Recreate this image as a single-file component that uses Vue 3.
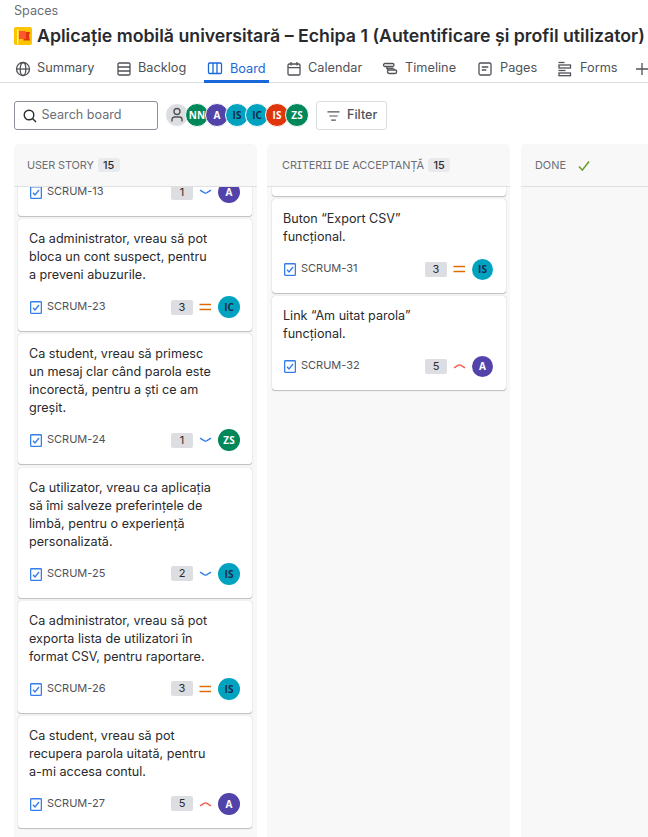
<script setup>
const tabs = [
  { name: 'Summary', icon: 'globe', width: 101 },
  { name: 'Backlog', icon: 'backlog', width: 90 },
  { name: 'Board', icon: 'columns', width: 80, active: true },
  { name: 'Calendar', icon: 'calendar', width: 96 },
  { name: 'Timeline', icon: 'timeline', width: 95 },
  { name: 'Pages', icon: 'pages', width: 80 },
  { name: 'Forms', icon: 'forms', width: 78 },
]

const people = [
  { initials: 'NN', tone: 'green' },
  { initials: 'A', tone: 'purple' },
  { initials: 'IS', tone: 'teal' },
  { initials: 'IC', tone: 'teal' },
  { initials: 'IS', tone: 'red' },
  { initials: 'ZS', tone: 'green' },
]

const columns = [
  {
    id: 'story', title: 'USER STORY', count: 15,
    cards: [
      { key: 'SCRUM-13', lines: ['', ''], points: 1, priority: 'low', who: 'A', tone: 'purple' },
      { key: 'SCRUM-23', lines: ['Ca administrator, vreau să pot', 'bloca un cont suspect, pentru', 'a preveni abuzurile.'], points: 3, priority: 'medium', who: 'IC', tone: 'teal' },
      { key: 'SCRUM-24', lines: ['Ca student, vreau să primesc', 'un mesaj clar când parola este', 'incorectă, pentru a ști ce am', 'greșit.'], points: 1, priority: 'low', who: 'ZS', tone: 'green' },
      { key: 'SCRUM-25', lines: ['Ca utilizator, vreau ca aplicația', 'să îmi salveze preferințele de', 'limbă, pentru o experiență', 'personalizată.'], points: 2, priority: 'low', who: 'IS', tone: 'teal' },
      { key: 'SCRUM-26', lines: ['Ca administrator, vreau să pot', 'exporta lista de utilizatori în', 'format CSV, pentru raportare.'], points: 3, priority: 'medium', who: 'IS', tone: 'teal' },
      { key: 'SCRUM-27', lines: ['Ca student, vreau să pot', 'recupera parola uitată, pentru', 'a-mi accesa contul.'], points: 5, priority: 'high', who: 'A', tone: 'purple' },
    ],
  },
  {
    id: 'criteria', title: 'CRITERII DE ACCEPTANȚĂ', count: 15,
    cards: [
      { key: '', lines: [] },
      { key: 'SCRUM-31', lines: ['Buton “Export CSV”', 'funcțional.'], points: 3, priority: 'medium', who: 'IS', tone: 'teal' },
      { key: 'SCRUM-32', lines: ['Link “Am uitat parola”', 'funcțional.'], points: 5, priority: 'high', who: 'A', tone: 'purple' },
    ],
  },
  { id: 'done', title: 'DONE', done: true, cards: [] },
]

const priorityPaths = {
  low: 'M1 5.200 L5.500 7.900 Q6.500 8.400 7.500 7.900 L12 5.200',
  medium: 'M.5 4.500H12M.5 9.500H12',
  high: 'M1 8.800 L5.500 6.100 Q6.500 5.600 7.500 6.100 L12 8.800',
}
</script>

<template>
  <div class="page">
    <div class="crumb">Spaces</div>
    <h1 class="title">
      <svg class="logo" viewBox="0 0 18 18">
        <rect width="18" height="18" rx="2" fill="#ffc400" />
        <path d="M3.700 2.500v15" stroke="#ffebae" stroke-width="1.400" />
        <path d="M5 4h6.500v8H5z" fill="#ff5630" />
        <path d="M11.500 5H16l-1 4 1 4.500H9.500V12h2z" fill="#de350b" />
      </svg>
      <span>Aplicație mobilă universitară – Echipa 1 (Autentificare și profil utilizator)</span>
    </h1>

    <nav class="tabs">
      <div v-for="t in tabs" :key="t.name" class="tab" :class="[{ active: t.active }, t.icon]" :style="{ width: t.width + 'px' }">
        <div class="tab-body">
          <svg class="tab-icon" viewBox="0 0 16 16">
            <template v-if="t.icon === 'globe'">
              <circle cx="8" cy="8" r="6.500" />
              <ellipse cx="8" cy="8" rx="2.800" ry="6.500" />
              <path d="M1.500 8h13" />
            </template>
            <template v-else-if="t.icon === 'backlog'">
              <rect x="2" y="2" width="12" height="12" rx="1.200" />
              <path d="M2 6h12M2 10h12" />
            </template>
            <template v-else-if="t.icon === 'columns'">
              <rect x="1.500" y="3" width="13" height="10.500" rx="1.200" />
              <path d="M6 3v10.500M10 3v10.500" />
            </template>
            <template v-else-if="t.icon === 'calendar'">
              <rect x="2" y="3" width="12" height="11" rx="1.200" />
              <path d="M2 6.700h12M5 1v3.500M11 1v3.500" />
            </template>
            <template v-else-if="t.icon === 'timeline'">
              <rect x="1.500" y="2.500" width="10.500" height="3" rx="1.500" />
              <path d="M5 5.500v1.700a1.500 1.500 0 0 0 1.500 1.500M12 9V7.500" />
              <rect x="5.500" y="9" width="9.200" height="3.500" rx="1.700" />
              <path d="M4.500 7.300h7" />
            </template>
            <template v-else-if="t.icon === 'pages'">
              <rect x="2" y="2" width="12" height="12" rx="1.500" />
              <path d="M4.800 6h6.500M4.800 9h4.500" />
            </template>
            <template v-else>
              <path d="M1.500 1.500h6" />
              <rect x="2" y="4" width="11.500" height="3" />
              <path d="M1.500 9.500h7" />
              <rect x="2" y="12" width="11.500" height="2.700" />
            </template>
          </svg>
          <span>{{ t.name }}</span>
        </div>
      </div>
      <svg class="plus" viewBox="0 0 14 14"><path d="M7 1v12M1 7h12" /></svg>
    </nav>

    <div class="toolbar">
      <div class="search">
        <svg viewBox="0 0 14 14"><circle cx="6" cy="6" r="4.800" /><path d="M9.500 9.500l3.500 3.500" /></svg>
        <span>Search board</span>
      </div>
      <div class="people">
        <div class="avatar person">
          <svg viewBox="0 0 14 16"><circle cx="7" cy="4.500" r="3" /><path d="M2 14.500v-2a2.500 2.500 0 0 1 2.500-2.500h5a2.500 2.500 0 0 1 2.500 2.500v2" /></svg>
        </div>
        <div v-for="(p, i) in people" :key="i" class="avatar" :class="p.tone">{{ p.initials }}</div>
      </div>
      <div class="filter">
        <svg viewBox="0 0 14 12"><path d="M.5 1.500h13M2.500 6h9M4.500 10.500h5" /></svg>
        <span>Filter</span>
      </div>
    </div>

    <main class="kanban">
      <section v-for="c in columns" :key="c.id" class="column" :class="c.id">
        <header class="column-head">
          <span class="column-title">{{ c.title }}</span>
          <span v-if="c.count" class="count">{{ c.count }}</span>
          <svg v-if="c.done" class="check" viewBox="0 0 12 12"><path d="M1 6.500l3.300 3.700L11 1.500" /></svg>
        </header>
        <div class="list">
          <article v-for="(k, i) in c.cards" :key="i" class="card">
            <div class="summary"><div v-for="(l, n) in k.lines" :key="n" class="line">{{ l }}</div></div>
            <footer v-if="k.key" class="meta">
              <svg class="task" viewBox="0 0 12 13"><rect x=".6" y=".7" width="10.800" height="11.600" rx=".8" /><path d="M3 6.800l2 2.200 4-5" /></svg>
              <span class="key">{{ k.key }}</span>
              <span class="points">{{ k.points }}</span>
              <svg class="priority" :class="k.priority" viewBox="0 0 13 14"><path :d="priorityPaths[k.priority]" /></svg>
              <span class="avatar" :class="k.tone">{{ k.who }}</span>
            </footer>
          </article>
        </div>
      </section>
    </main>
  </div>
</template>

<style>
body { background: #fff; overflow: hidden; }
</style>

<style scoped>
.page { width: 648px; height: 837px; overflow: hidden; display: flex; flex-direction: column; font-family: Inter, "Liberation Sans", sans-serif; color: #292a2e; box-sizing: border-box; }
svg { display: block; flex: none; fill: none; stroke: currentColor; }
.crumb { height: 22px; line-height: 21px; padding-left: 14px; font-size: 12.6px; color: #6b6e76; flex: none; }
.title { margin: 0; height: 28px; line-height: 26px; display: flex; align-items: center; gap: 5px; padding-left: 14px; font-size: 17.73px; font-weight: 600; white-space: nowrap; flex: none; }
.title span { margin-top: -1px; }
.logo { width: 18px; height: 18px; }
.logo > :not([stroke]) { stroke: none; }
.tabs { height: 32px; flex: none; display: flex; padding-left: 15px; border-bottom: 1px solid #dcdde1; color: #505258; font-size: 12.75px; }
.tab { height: 33px; flex: none; white-space: nowrap; }
.tab-body { height: 33px; box-sizing: border-box; padding-top: 2px; display: flex; align-items: center; gap: 7px; width: max-content; }
.globe .tab-body, .backlog .tab-body, .calendar .tab-body { gap: 6px; }
.tab-icon { width: 16px; height: 16px; stroke-width: 1.3; margin-top: 2px; }
.tab.active { color: #1868db; }
.active .tab-body { border-bottom: 3px solid #1868db; padding: 6px 3px 0 3px; margin-left: -2px; }
.active .tab-icon { margin-top: 0; }
.plus { width: 14px; height: 14px; margin-top: 12px; stroke-width: 1.3; }
.toolbar { height: 29px; margin-top: 18px; padding-left: 14px; display: flex; flex: none; font-size: 12.6px; }
.search { width: 144px; box-sizing: border-box; border: 1px solid #8c8f97; border-radius: 3px; display: flex; align-items: center; padding-left: 7.5px; gap: 5px; color: #6b6e76; }
.search span { margin-top: -2px; }
.search svg { width: 14px; height: 14px; color: #292a2e; stroke-width: 1.4; }
.people { display: flex; align-items: center; margin-left: 7px; width: 144px; }
.avatar { width: 22px; height: 22px; border-radius: 50%; display: flex; align-items: center; justify-content: center; font-family: "Open Sans", "Noto Sans", sans-serif; font-size: 10px; font-weight: 700; flex: none; color: #fff; }
.people .avatar { border: 1px solid #fff; margin-right: -4px; }
.people .avatar, .people .person { margin-top: -1px; }
.people .person { background: #dddee1; color: #505258; }
.person svg { width: 14px; height: 16px; stroke-width: 1.4; }
.green { background: #00875a; }
.purple { background: #5243aa; }
.teal { background: #00a3bf; }
.avatar.teal { color: #172b4d; }
.red { background: #de350b; }
.filter { width: 71px; box-sizing: border-box; border: 1px solid #dcdde1; border-radius: 3px; margin-left: 7px; display: flex; align-items: center; padding-left: 10px; gap: 7px; font-weight: 500; color: #505258; }
.filter span { margin-top: -2px; }
.filter svg { width: 13px; height: 12px; stroke-width: 1.3; }
.kanban { margin-top: 14px; padding-left: 14px; flex: 1; min-height: 0; display: flex; gap: 10px; }
.column { width: 243px; flex: none; background: #f8f8f8; border-radius: 5px 5px 0 0; display: flex; flex-direction: column; min-height: 0; }
.column.done { margin-left: 1px; }
.column-head { height: 42px; flex: none; display: flex; align-items: center; padding-left: 14px; font-size: 10.9px; color: #6b6e76; border-bottom: 1px solid #dfe0e2; font-feature-settings: "cv08"; }
.story .column-head { padding-left: 13px; }
.story .column-title { letter-spacing: -0.12px; }
.criteria .column-head { padding-left: 15px; }
.criteria .column-title { letter-spacing: -0.02px; }
.count { width: 22px; height: 14px; line-height: 14px; background: #e9eaec; border-radius: 3px; text-align: center; color: #292a2e; font-weight: 500; margin-left: 4px; }
.check { width: 12px; height: 12px; color: #6a9a23; stroke-width: 1.5; margin-left: 12px; margin-top: 2px; }
.list { flex: 1; min-height: 0; overflow: hidden; padding: 0 5px 0 4px; display: flex; flex-direction: column; gap: 3.15px; }
.criteria .list { padding: 0 4px 0 5px; }
.card { flex: none; background: #fff; border-radius: 3px; padding: 11px 11px 13px; box-shadow: 0 1px 1px #1e1f2140, 0 0 1px #1e1f214f; }
.story .card:first-child { margin-top: -64.9px; }
.criteria .card:first-child { margin-top: -15px; }
.line { height: 18px; line-height: 18px; font-size: 12.6px; white-space: nowrap; }
.meta { height: 22px; margin-top: 12px; display: flex; align-items: center; font-size: 11px; color: #505258; }
.task { width: 12px; height: 13px; color: #357de8; stroke-width: 1.35; margin-left: 1px; margin-top: 1px; }
.key { margin-left: 5px; flex: 1; margin-top: -2px; }
.points { width: 22px; height: 15px; line-height: 14px; background: #dddee1; border-radius: 2px; text-align: center; color: #292a2e; }
.priority { width: 13px; height: 14px; margin: 0 6px; stroke-width: 1.4; }
.meta .avatar { margin-right: 1px; }
.criteria .meta .avatar { width: 21px; height: 21px; margin-right: 2px; }
.low { color: #357de8; }
.medium { color: #e06c00; }
.high { color: #f15b50; }
</style>
